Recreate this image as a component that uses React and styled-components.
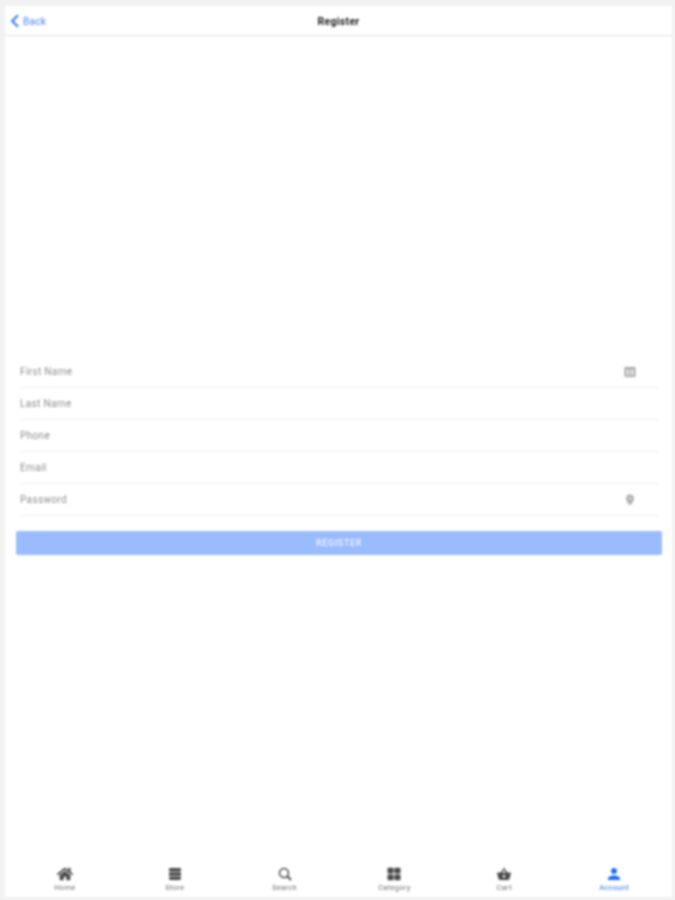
import React from "react";
import styled, { createGlobalStyle } from "styled-components";
import { FaHome } from "react-icons/fa";
import { IoMdBasket, IoMdPerson } from "react-icons/io";

const Global = createGlobalStyle`
  html, body { margin: 0; padding: 0; background: #f2f2f2; }
  body { font-family: Roboto, "Liberation Sans", sans-serif; }
`;

const Page = styled.div`
  width: 675px;
  height: 900px;
  box-sizing: border-box;
  padding: 6px 3px 3px 5px;
  filter: blur(0.8px);
`;

const Frame = styled.div`
  height: 100%;
  background: #fff;
  display: flex;
  flex-direction: column;
`;

const Header = styled.header`
  height: 29px;
  flex: none;
  display: grid;
  grid-template-columns: 1fr auto 1fr;
  align-items: center;
  border-bottom: 1px solid #e4e4e4;
`;

const BackLink = styled.div`
  display: flex;
  align-items: center;
  gap: 3px;
  padding: 1px 0 0 5px;
  color: #6b9bfa;
  font-size: 10px;
  letter-spacing: 0.3px;
  font-weight: 500;
`;

const BackChevron = styled.svg`
  width: 10px;
  height: 14px;
  fill: none;
  stroke: #3b7cf6;
  stroke-width: 2.2;
`;

const Title = styled.div`
  font-size: 10.5px;
  font-weight: 700;
  color: #1c1c1c;
  letter-spacing: 0.3px;
  padding-top: 1px;
`;

const Content = styled.main`
  flex: 1;
  padding: 320px 10px 0 11px;
`;

const FieldRow = styled.div`
  height: 32px;
  box-sizing: border-box;
  margin-left: 4px;
  margin-right: 4px;
  border-bottom: 1px solid #f0f0f0;
  display: flex;
  align-items: center;
  justify-content: space-between;
  padding: 0 22px 0 0;
  color: #8e8e8e;
  font-size: 10px;
  letter-spacing: 0.35px;
`;

const FieldIcon = styled.svg`
  width: 12px;
  height: 12px;
  flex: none;
`;

const RegisterButton = styled.button`
  display: block;
  width: 646px;
  height: 24px;
  margin: 15px 0 0;
  border: 0;
  border-radius: 2px;
  background: #9abcfd;
  color: #eef3ff;
  font: 500 9px Roboto, sans-serif;
  letter-spacing: 0.6px;
`;

const TabBar = styled.nav`
  flex: none;
  height: 36px;
  display: grid;
  grid-template-columns: repeat(6, 1fr);
  padding: 0 3px 0 5px;
`;

const Tab = styled.div`
  display: flex;
  flex-direction: column;
  align-items: center;
  justify-content: flex-start;
  padding-top: 5px;
  color: ${(p) => (p.$active ? "#2b73f5" : "#6f6f6f")};
  font-size: 7.5px;
  letter-spacing: 0.3px;
  line-height: 9px;

  & > svg {
    width: 16px;
    height: 16px;
    margin-bottom: 1px;
    color: ${(p) => (p.$active ? "#1a6bf5" : "#4a4a4a")};
  }
`;

const StoreIcon = () => (
  <svg viewBox="0 0 16 16" fill="currentColor">
    <rect x="2" y="2" width="12" height="3.6" rx="1.4" />
    <rect x="2" y="6.300" width="12" height="3.4" />
    <rect x="2" y="10.400" width="12" height="3.6" rx="1.4" />
  </svg>
);

const SearchIcon = () => (
  <svg viewBox="0 0 16 16" fill="none" stroke="currentColor" strokeWidth="1.5">
    <circle cx="7" cy="7" r="4.5" />
    <path d="M10.400 10.400 14 14" strokeWidth="2" />
  </svg>
);

const CategoryIcon = () => (
  <svg viewBox="0 0 16 16" fill="currentColor">
    <rect x="1.500" y="1.800" width="6.100" height="5.800" rx="1" />
    <rect x="8.400" y="1.800" width="6.100" height="5.800" rx="1" />
    <rect x="1.500" y="8.400" width="6.100" height="5.800" rx="1" />
    <rect x="8.400" y="8.400" width="6.100" height="5.800" rx="1" />
  </svg>
);

const fields = [
  { label: "First Name", icon: "card" },
  { label: "Last Name" },
  { label: "Phone" },
  { label: "Email" },
  { label: "Password", icon: "pin" },
];

const tabs = [
  { label: "Home", Icon: FaHome },
  { label: "Store", Icon: StoreIcon },
  { label: "Search", Icon: SearchIcon },
  { label: "Category", Icon: CategoryIcon },
  { label: "Cart", Icon: IoMdBasket },
  { label: "Account", Icon: IoMdPerson, active: true },
];

export default function App() {
  return (
    <Page>
      <Global />
      <Frame>
        <Header>
          <BackLink>
            <BackChevron viewBox="0 0 10 14">
              <path d="M8 1.200 2.200 7 8 12.800" />
            </BackChevron>
            Back
          </BackLink>
          <Title>Register</Title>
          <span />
        </Header>
        <Content>
          {fields.map((f) => (
            <FieldRow key={f.label}>
              {f.label}
              {f.icon === "card" && (
                <FieldIcon viewBox="0 0 12 12">
                  <rect x="0.500" y="1" width="11" height="10" rx="1" fill="#a4a4a4" />
                  <rect x="2" y="3" width="3.500" height="6.500" fill="#dcdcdc" />
                  <rect x="6.500" y="3" width="3.500" height="6.500" fill="#dcdcdc" />
                </FieldIcon>
              )}
              {f.icon === "pin" && (
                <FieldIcon viewBox="0 0 12 12">
                  <path fill="#b0b0b0" d="M6 .6a3.900 3.900 0 0 1 3.900 3.900c0 2.800-2.600 5.700-3.900 6.900-1.300-1.200-3.900-4.100-3.900-6.900A3.900 3.900 0 0 1 6 .6z" />
                  <circle cx="6" cy="4.500" r="1.300" fill="#dedede" />
                </FieldIcon>
              )}
            </FieldRow>
          ))}
          <RegisterButton>REGISTER</RegisterButton>
        </Content>
        <TabBar>
          {tabs.map(({ label, Icon, active }) => (
            <Tab key={label} $active={active}>
              <Icon />
              {label}
            </Tab>
          ))}
        </TabBar>
      </Frame>
    </Page>
  );
}
